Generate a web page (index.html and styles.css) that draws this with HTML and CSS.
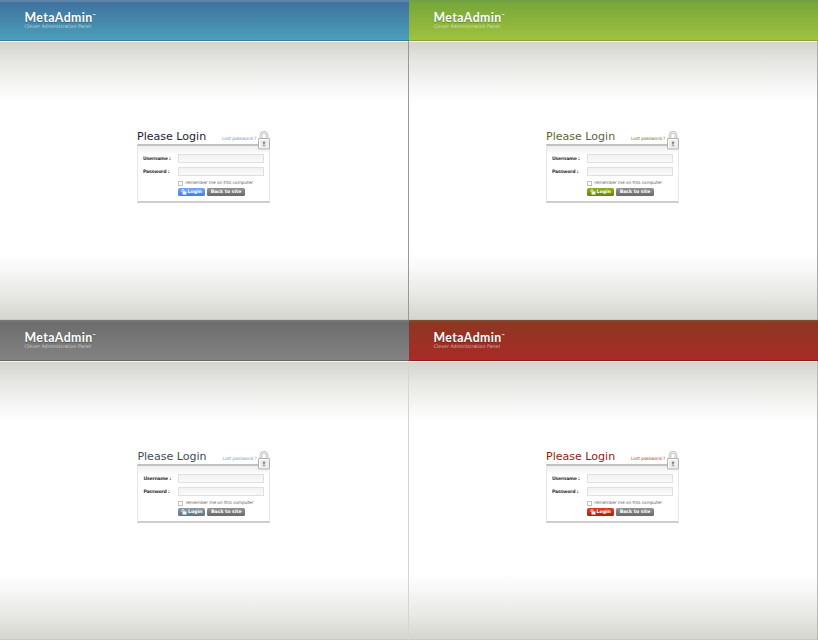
FILE: index.html
```html
<!DOCTYPE html>
<html lang="en">
<head>
<meta charset="utf-8">
<title>MetaAdmin</title>
<link rel="stylesheet" href="styles.css">
</head>
<body>
<svg class="defs" width="0" height="0" aria-hidden="true">
  <symbol id="lock" viewBox="0 0 12 19">
    <path d="M3 9V4.2C3 2.4 4.1 1.3 6 1.3S9 2.4 9 4.2V9" fill="none" stroke="#b4b4b4" stroke-width="2.6"/>
    <path d="M3 9V4.2C3 2.4 4.1 1.3 6 1.3S9 2.4 9 4.2V9" fill="none" stroke="#eeeeee" stroke-width="1.2"/>
    <rect x=".5" y="7.5" width="11" height="10.5" rx=".5" fill="#eeeeee" stroke="#b2b2b2"/>
    <path d="M1.5 17V8.5H10.5" fill="none" stroke="#fff"/>
    <circle cx="6" cy="11.8" r="1.3" fill="#888"/>
    <path d="M6 12V15M4.7 14.7H7.3" stroke="#999"/>
  </symbol>
  <symbol id="key" viewBox="0 0 6 6">
    <path d="M1 3V1.5Q1 .5 2 .5T3 1.5V2.5" fill="none" stroke="#fff" stroke-width=".8"/>
    <rect x="1.5" y="2.4" width="4" height="3.2" fill="#fff" opacity=".9"/>
  </symbol>
</svg>
<main class="themes">
  <section class="theme blue">
    <header class="bar"><div class="logo">MetaAdmin<sup>™</sup></div><div class="tagline">Clever Administration Panel</div></header>
    <div class="stage"><form class="login">
      <div class="heading"><h1>Please Login</h1><a class="lost">Lost password ?</a><svg class="lock"><use href="#lock"/></svg></div>
      <div class="panel">
        <label class="field"><span>Username :</span><input type="text"></label>
        <label class="field"><span>Password :</span><input type="password"></label>
        <label class="remember"><input type="checkbox"><span>remember me on this computer</span></label>
        <div class="actions"><button type="button" class="enter"><svg><use href="#key"/></svg><span>Login</span></button><button type="button" class="back"><span>Back to site</span></button></div>
      </div>
    </form></div>
  </section>
  <section class="theme green">
    <header class="bar"><div class="logo">MetaAdmin<sup>™</sup></div><div class="tagline">Clever Administration Panel</div></header>
    <div class="stage"><form class="login">
      <div class="heading"><h1>Please Login</h1><a class="lost">Lost password ?</a><svg class="lock"><use href="#lock"/></svg></div>
      <div class="panel">
        <label class="field"><span>Username :</span><input type="text"></label>
        <label class="field"><span>Password :</span><input type="password"></label>
        <label class="remember"><input type="checkbox"><span>remember me on this computer</span></label>
        <div class="actions"><button type="button" class="enter"><svg><use href="#key"/></svg><span>Login</span></button><button type="button" class="back"><span>Back to site</span></button></div>
      </div>
    </form></div>
  </section>
  <section class="theme gray">
    <header class="bar"><div class="logo">MetaAdmin<sup>™</sup></div><div class="tagline">Clever Administration Panel</div></header>
    <div class="stage"><form class="login">
      <div class="heading"><h1>Please Login</h1><a class="lost">Lost password ?</a><svg class="lock"><use href="#lock"/></svg></div>
      <div class="panel">
        <label class="field"><span>Username :</span><input type="text"></label>
        <label class="field"><span>Password :</span><input type="password"></label>
        <label class="remember"><input type="checkbox"><span>remember me on this computer</span></label>
        <div class="actions"><button type="button" class="enter"><svg><use href="#key"/></svg><span>Login</span></button><button type="button" class="back"><span>Back to site</span></button></div>
      </div>
    </form></div>
  </section>
  <section class="theme red">
    <header class="bar"><div class="logo">MetaAdmin<sup>™</sup></div><div class="tagline">Clever Administration Panel</div></header>
    <div class="stage"><form class="login">
      <div class="heading"><h1>Please Login</h1><a class="lost">Lost password ?</a><svg class="lock"><use href="#lock"/></svg></div>
      <div class="panel">
        <label class="field"><span>Username :</span><input type="text"></label>
        <label class="field"><span>Password :</span><input type="password"></label>
        <label class="remember"><input type="checkbox"><span>remember me on this computer</span></label>
        <div class="actions"><button type="button" class="enter"><svg><use href="#key"/></svg><span>Login</span></button><button type="button" class="back"><span>Back to site</span></button></div>
      </div>
    </form></div>
  </section>
</main>
</body>
</html>
```
FILE: styles.css
```css
* { box-sizing: border-box; }
body { margin: 0; font-family: "DejaVu Sans", sans-serif; overflow: hidden; }
.defs { position: absolute; }
.themes { display: grid; grid-template-columns: 409px 409px; grid-template-rows: 320px 320px; }
.theme { display: flex; flex-direction: column; border-right: 1px solid var(--edge); }

.blue { --edge: #999; --top: #5d84a8; --from: #3f729f; --to: #4b9fb9; --rule: #38809a; --title: #1c2230; --link: #6f93d0; --b1: #77a8f8; --b2: #3f7df0; }
.green { --edge: #aaa; --top: #71a044; --from: #76a63a; --to: #a0c23e; --rule: #87a633; --title: #5d6433; --link: #607a18; --b1: #8fb021; --b2: #628507; }
.gray { --edge: #d4d4d0; --top: #767676; --from: #6c6c6c; --to: #838383; --rule: #676767; --title: #414c59; --link: #7f9ab8; --b1: #8c9ca8; --b2: #617381; }
.red { --edge: #b8b8b4; --top: #81482f; --from: #8d3722; --to: #a92a28; --rule: #8c1c1a; --title: #8d1c0d; --link: #c03522; --b1: #da4328; --b2: #b01e08; }

.bar {
  height: 41px;
  margin-right: -1px;
  padding: 10px 0 0 24.5px;
  color: #fff;
  border-top: 2px solid var(--top);
  border-bottom: 1px solid var(--rule);
  background: linear-gradient(var(--from), var(--to));
}
.logo { height: 12px; font: 700 12.3px/12px Lato, sans-serif; letter-spacing: .4px; white-space: nowrap; text-shadow: 0 1px 1px rgba(0, 0, 0, .3); }
.logo sup { font-size: 4px; line-height: 0; vertical-align: 5px; letter-spacing: 0; }
.tagline { font: 4.8px/5px "DejaVu Sans", sans-serif; color: rgba(255, 255, 255, .6); white-space: nowrap; }

.stage {
  flex: 1;
  padding: 88px 0 0 137px;
  border-top: 1px solid #f4f4f2;
  border-bottom: 1px solid #c9c9c4;
  background:
    linear-gradient(#d5d5ce, #e5e5e1 30%, #f8f8f7 75%, #fff) top / 100% 62px no-repeat,
    linear-gradient(#fff, #f8f8f7 25%, #e5e5e1 70%, #d5d5ce) bottom / 100% 66px no-repeat,
    #fff;
}
.gray .stage { padding-left: 137.4px; }
.login { width: 133px; }

.heading { position: relative; display: flex; height: 14px; align-items: flex-start; }
.heading h1 { margin: 0; font-size: 11.05px; line-height: 13px; font-weight: 400; white-space: nowrap; color: var(--title); }
.lost { position: absolute; left: 85px; top: 6px; font-size: 4.4px; line-height: 6px; letter-spacing: -.05px; white-space: nowrap; color: var(--link); }
.lock { position: absolute; left: 121px; top: .5px; width: 12px; height: 19px; z-index: 1; }

.panel {
  height: 59px;
  padding: 8px 5px 0;
  border: 1px solid #e8e8e8;
  border-top: 2px solid #c2c2c2;
  border-bottom: 2px solid #cfcfcf;
  background: linear-gradient(#eeeeee, #fff 9px);
}
.field { display: flex; align-items: center; height: 9px; margin-bottom: 4.4px; }
.field span { width: 35.5px; font-size: 4.7px; line-height: 6px; font-weight: 700; letter-spacing: -.25px; color: #333; white-space: nowrap; }
.field input { width: 86px; height: 9px; padding: 0; border: 1px solid #e0e0e0; border-radius: 0; background: linear-gradient(#f2f2f2, #fafafa); outline: 0; }
.remember { display: flex; align-items: center; height: 6px; margin: -.7px 0 0 35px; gap: 2.3px; font-size: 4.4px; line-height: 6px; letter-spacing: -.09px; color: #666; white-space: nowrap; }
.remember input { appearance: none; width: 5px; height: 5px; margin: 0; border: 1px solid #c0c0c0; background: #fff; }
.actions { display: flex; gap: 2.5px; margin: 1.9px 0 0 35px; }
.actions button { display: flex; align-items: center; justify-content: center; gap: 1px; height: 8px; padding: 0; border: 0; border-radius: 1.5px; color: #fff; font: 700 4.7px/8px "DejaVu Sans", sans-serif; letter-spacing: -.05px; white-space: nowrap; }
.actions svg { width: 6px; height: 6px; }
.enter { width: 26.5px; background: linear-gradient(var(--b1), var(--b2)); }
.back { width: 38px; background: linear-gradient(#949494, #686868); }
```
